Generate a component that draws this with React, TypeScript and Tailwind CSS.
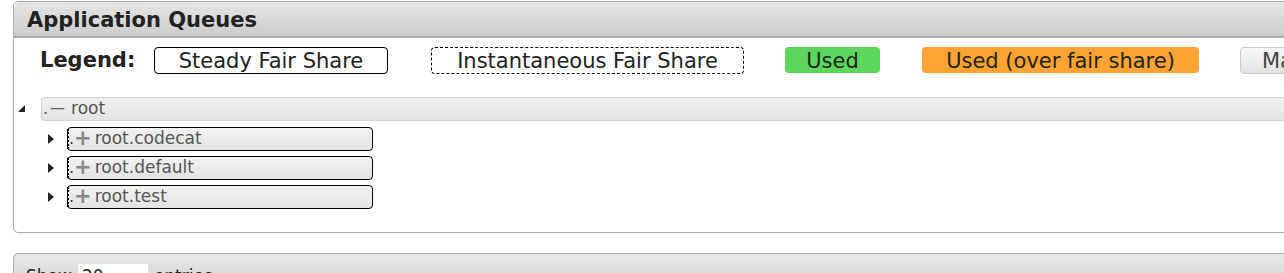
import React from "react";

const font = "font-['DejaVu_Sans','Verdana',sans-serif]";

function Child({ name }: { name: string }) {
  return (
    <div className="flex items-center h-[29px]">
      <div className="w-[53px] shrink-0 flex justify-end pr-[13px]">
        <svg width="6" height="10" viewBox="0 0 6 10">
          <polygon points="0,0 6,5 0,10" fill="#222" />
        </svg>
      </div>
      <div className="w-[306px] shrink-0 h-[24px] border border-black rounded-[4px] bg-gradient-to-b from-[#f2f2f2] to-[#e3e3e3] flex items-center relative">
        <span className="absolute left-[-1px] top-[1px] bottom-[1px] border-l-2 border-dotted border-black"></span>
        <span className="text-[#333] text-[16px] ml-[1px] leading-none self-end mb-[3px]">.</span>
        <span className="text-[#888] text-[21px] leading-none font-bold">+</span>
        <span className="text-[#555] text-[17px] ml-[3px] leading-none whitespace-nowrap">{name}</span>
      </div>
    </div>
  );
}

export default function App() {
  return (
    <div className={`w-[1284px] h-[273px] overflow-hidden bg-white ${font}`}>
      <div className="pt-px pl-[13px]">
        <div className="w-[1300px] border border-[#aaaaaa] rounded-t-[5px] rounded-bl-[5px]">
          <div className="h-[36px] bg-gradient-to-b from-[#e6e6e6] to-[#cccccc] border-b-2 border-[#aaaaaa] rounded-t-[4px] flex items-center pl-[13px] pt-[3px]">
            <span className="text-[21px] font-bold text-[#222] whitespace-nowrap">Application Queues</span>
          </div>
          <div className="flex items-center h-[44px] text-[21px] text-[#222] whitespace-nowrap">
            <span className="shrink-0 ml-[26px] font-bold w-[114px] pt-[2px]">Legend:</span>
            <div className="shrink-0 w-[234px] h-[27px] border border-black rounded-[4px] flex items-center justify-center leading-none pt-[2px]">Steady Fair Share</div>
            <div className="shrink-0 ml-[43px] w-[313px] h-[27px] border border-dashed border-black rounded-[4px] flex items-center justify-center leading-none pt-[2px]">Instantaneous Fair Share</div>
            <div className="shrink-0 ml-[41px] w-[95px] h-[26px] bg-[#5cd65c] rounded-[4px] flex items-center justify-center leading-none pt-[2px]">Used</div>
            <div className="shrink-0 ml-[42px] w-[277px] h-[26px] bg-[#ffa333] rounded-[4px] flex items-center justify-center leading-none pt-[2px]">Used (over fair share)</div>
            <div className="shrink-0 ml-[41px] w-[160px] h-[27px] border border-[#cccccc] rounded-[4px] bg-gradient-to-b from-[#f6f6f6] to-[#e3e3e3] flex items-center pl-[21px] leading-none text-[#444] pt-[2px]">Max Capacity</div>
          </div>
          <div className="pt-[14px] pb-[21px]">
            <div className="flex items-center h-[25px]">
              <div className="w-[27px] shrink-0 flex justify-end pr-[16px]">
                <svg width="7" height="7" viewBox="0 0 7 7">
                  <polygon points="7,0 7,7 0,7" fill="#222" />
                </svg>
              </div>
              <div className="flex-1 h-[24px] border border-[#d3d3d3] border-r-0 rounded-l-[4px] bg-gradient-to-b from-[#f0f0f0] to-[#e4e4e4] flex items-center">
                <span className="text-[#555] text-[16px] ml-[1px] leading-none self-end mb-[3px]">.</span>
                <span className="text-[#666] text-[15px] leading-none ml-[2px]">—</span>
                <span className="text-[#555] text-[17px] ml-[6px] leading-none">root</span>
              </div>
            </div>
            <div className="mt-[3px] flex flex-col">
              <Child name="root.codecat" />
              <Child name="root.default" />
              <Child name="root.test" />
            </div>
          </div>
        </div>
        <div className="mt-[20px] w-[1300px] h-[40px] border border-[#aaaaaa] rounded-t-[5px] bg-gradient-to-b from-[#e8e8e8] to-[#d0d0d0] flex items-start pt-[10px] pl-[12px] text-[17px] text-[#222] whitespace-nowrap">
          <span>Show</span>
          <span className="ml-[6px] bg-white w-[70px] px-[4px]">20 ▴▾</span>
          <span className="ml-[6px]">entries</span>
        </div>
      </div>
    </div>
  );
}
